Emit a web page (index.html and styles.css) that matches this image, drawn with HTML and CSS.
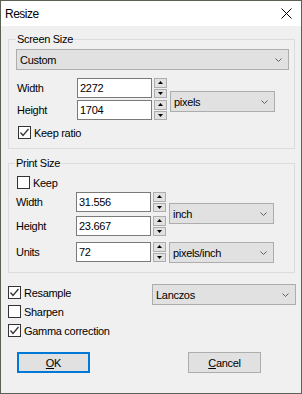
FILE: index.html
```html
<!DOCTYPE html>
<html lang="en">
<head>
    <meta charset="UTF-8">
    <meta name="viewport" content="width=device-width, initial-scale=1.0">
    <title>Resize</title>
    <link rel="stylesheet" href="styles.css">
</head>
<body>

<div class="window">
    <div class="titlebar">
        <span class="title">Resize</span>
        <svg class="close" width="11" height="11" viewBox="0 0 11 11">
            <path d="M0.5 0.5 L10.5 10.5 M10.5 0.5 L0.5 10.5" stroke="#000" stroke-width="1" fill="none"/>
        </svg>
    </div>

    <div class="content">
        <fieldset class="group screen">
            <legend>Screen Size</legend>
            <div class="combo">
                <span>Custom</span>
                <svg class="chevron" width="7" height="4" viewBox="0 0 7 4"><path d="M0.5 0.5 L3.5 3.5 L6.5 0.5" stroke="#606060" fill="none"/></svg>
            </div>

            <div class="size-grid">
                <label class="lbl">Width</label>
                <input class="num" type="text" value="2272">
                <div class="spin">
                    <span class="spin-btn"><svg width="5" height="3" viewBox="0 0 5 3"><path d="M2.5 0 L5 3 L0 3 Z" fill="#000"/></svg></span>
                    <span class="spin-btn"><svg width="5" height="3" viewBox="0 0 5 3"><path d="M0 0 L5 0 L2.5 3 Z" fill="#000"/></svg></span>
                </div>
                <div class="combo unit">
                    <span>pixels</span>
                    <svg class="chevron" width="7" height="4" viewBox="0 0 7 4"><path d="M0.5 0.5 L3.5 3.5 L6.5 0.5" stroke="#606060" fill="none"/></svg>
                </div>

                <label class="lbl">Height</label>
                <input class="num" type="text" value="1704">
                <div class="spin">
                    <span class="spin-btn"><svg width="5" height="3" viewBox="0 0 5 3"><path d="M2.5 0 L5 3 L0 3 Z" fill="#000"/></svg></span>
                    <span class="spin-btn"><svg width="5" height="3" viewBox="0 0 5 3"><path d="M0 0 L5 0 L2.5 3 Z" fill="#000"/></svg></span>
                </div>
            </div>

            <div class="check-row ratio">
                <span class="box"><svg width="11" height="11" viewBox="0 0 11 11"><path d="M1.5 5.5 L4 8.5 L9.5 2" stroke="#333" stroke-width="1.3" fill="none"/></svg></span>
                <span>Keep ratio</span>
            </div>
        </fieldset>

        <fieldset class="group print">
            <legend>Print Size</legend>
            <div class="check-row keep">
                <span class="box"></span>
                <span>Keep</span>
            </div>

            <div class="size-grid print-grid">
                <label class="lbl">Width</label>
                <input class="num" type="text" value="31.556">
                <div class="spin">
                    <span class="spin-btn"><svg width="5" height="3" viewBox="0 0 5 3"><path d="M2.5 0 L5 3 L0 3 Z" fill="#000"/></svg></span>
                    <span class="spin-btn"><svg width="5" height="3" viewBox="0 0 5 3"><path d="M0 0 L5 0 L2.5 3 Z" fill="#000"/></svg></span>
                </div>
                <div class="combo unit">
                    <span>inch</span>
                    <svg class="chevron" width="7" height="4" viewBox="0 0 7 4"><path d="M0.5 0.5 L3.5 3.5 L6.5 0.5" stroke="#606060" fill="none"/></svg>
                </div>

                <label class="lbl">Height</label>
                <input class="num" type="text" value="23.667">
                <div class="spin">
                    <span class="spin-btn"><svg width="5" height="3" viewBox="0 0 5 3"><path d="M2.5 0 L5 3 L0 3 Z" fill="#000"/></svg></span>
                    <span class="spin-btn"><svg width="5" height="3" viewBox="0 0 5 3"><path d="M0 0 L5 0 L2.5 3 Z" fill="#000"/></svg></span>
                </div>

                <label class="lbl">Units</label>
                <input class="num" type="text" value="72">
                <div class="spin">
                    <span class="spin-btn"><svg width="5" height="3" viewBox="0 0 5 3"><path d="M2.5 0 L5 3 L0 3 Z" fill="#000"/></svg></span>
                    <span class="spin-btn"><svg width="5" height="3" viewBox="0 0 5 3"><path d="M0 0 L5 0 L2.5 3 Z" fill="#000"/></svg></span>
                </div>
                <div class="combo unit per">
                    <span>pixels/inch</span>
                    <svg class="chevron" width="7" height="4" viewBox="0 0 7 4"><path d="M0.5 0.5 L3.5 3.5 L6.5 0.5" stroke="#606060" fill="none"/></svg>
                </div>
            </div>
        </fieldset>

        <div class="options">
            <div class="checks">
                <div class="check-row">
                    <span class="box"><svg width="11" height="11" viewBox="0 0 11 11"><path d="M1.5 5.5 L4 8.5 L9.5 2" stroke="#333" stroke-width="1.3" fill="none"/></svg></span>
                    <span>Resample</span>
                </div>
                <div class="check-row">
                    <span class="box"></span>
                    <span>Sharpen</span>
                </div>
                <div class="check-row">
                    <span class="box"><svg width="11" height="11" viewBox="0 0 11 11"><path d="M1.5 5.5 L4 8.5 L9.5 2" stroke="#333" stroke-width="1.3" fill="none"/></svg></span>
                    <span>Gamma correction</span>
                </div>
            </div>
            <div class="combo filter">
                <span>Lanczos</span>
                <svg class="chevron" width="7" height="4" viewBox="0 0 7 4"><path d="M0.5 0.5 L3.5 3.5 L6.5 0.5" stroke="#606060" fill="none"/></svg>
            </div>
        </div>

        <div class="buttons">
            <button class="btn default"><u>O</u>K</button>
            <button class="btn"><u>C</u>ancel</button>
        </div>
    </div>
</div>

</body>
</html>
```

FILE: styles.css
```css
body {
    margin: 0;
    background-color: #4f574a;
    font-family: "Liberation Sans", Arial, sans-serif;
    font-size: 11px;
    letter-spacing: -0.3px;
    color: #000;
}

.window {
    width: 302px;
    height: 394px;
    box-sizing: border-box;
    border: 1px solid #5a6155;
    background-color: #f0f0f0;
}

.titlebar {
    height: 25px;
    background-color: #fff;
    display: flex;
    align-items: center;
    justify-content: space-between;
    padding: 0 9px 0 4px;
}

.title {
    font-size: 12px;
    letter-spacing: -0.5px;
}

.content {
    padding: 7px 6px 0 7px;
}

.group {
    margin: 0;
    border: 1px solid #dcdcdc;
    padding: 3px 5px 9px 7px;
    min-width: 0;
}

.group legend {
    padding: 0 1px;
    line-height: 13px;
}

.print {
    margin-top: 8px;
    padding: 6px 5px 10px 6px;
}

.combo {
    height: 21px;
    box-sizing: border-box;
    border: 1px solid #adadad;
    background-color: #e1e1e1;
    display: flex;
    align-items: center;
    justify-content: space-between;
    padding: 0 6px 0 3px;
}

.chevron {
    display: block;
}

.size-grid {
    display: grid;
    grid-template-columns: 61px 77px 16px 105px;
    grid-template-rows: 22px 20px;
    align-items: start;
    margin-top: 8px;
}

.print-grid {
    grid-template-rows: 24px 26px 20px;
    margin-top: 3px;
}

.lbl {
    line-height: 20px;
    padding-left: 1px;
}

.num {
    width: 75px;
    height: 20px;
    box-sizing: border-box;
    border: 1px solid #7a7a7a;
    background-color: #fff;
    padding: 0 2px;
    margin: 0;
    font: inherit;
    letter-spacing: inherit;
    color: #000;
    outline: none;
}

.spin {
    width: 13px;
    height: 20px;
    display: flex;
    flex-direction: column;
    gap: 1px;
}

.spin-btn {
    flex: 1;
    border: 1px solid #adadad;
    background-color: #e1e1e1;
    display: flex;
    align-items: center;
    justify-content: center;
}

.spin-btn svg {
    display: block;
}

.unit {
    grid-column: 4;
    grid-row: 1 / span 2;
    margin-top: 13px;
}

.print-grid .unit {
    margin-top: 11px;
}

.print-grid .per {
    grid-row: 3;
    margin-top: 0;
}

.check-row {
    display: flex;
    align-items: center;
    height: 13px;
    gap: 3px;
}

.box {
    width: 13px;
    height: 13px;
    box-sizing: border-box;
    border: 1px solid #333;
    background-color: #fff;
    display: flex;
    align-items: center;
    justify-content: center;
}

.box svg {
    display: block;
}

.ratio {
    margin-top: 6px;
    padding-left: 2px;
}

.keep {
    padding-left: 2px;
}

.options {
    display: flex;
    justify-content: space-between;
    align-items: flex-start;
    margin-top: 11px;
    margin-right: -1px;
}

.checks {
    display: flex;
    flex-direction: column;
    gap: 6px;
    padding-top: 2px;
}

.filter {
    width: 144px;
}

.buttons {
    display: flex;
    justify-content: space-between;
    margin-top: 15px;
    padding: 0 34px 0 9px;
}

.btn {
    width: 73px;
    height: 21px;
    box-sizing: border-box;
    border: 1px solid #adadad;
    background-color: #e1e1e1;
    font: inherit;
    letter-spacing: inherit;
    color: #000;
    padding: 0;
}

.btn.default {
    border: 2px solid #0078d7;
}
```
